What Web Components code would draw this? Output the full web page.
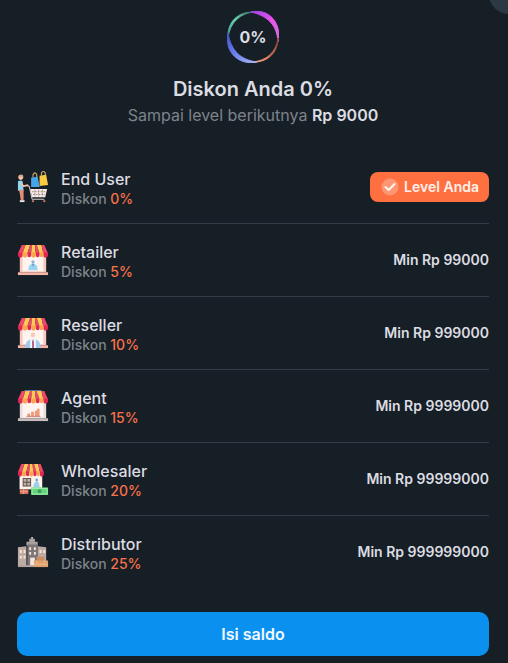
<!DOCTYPE html>
<html lang="id">
<head>
<meta charset="utf-8">
<meta name="viewport" content="width=device-width, initial-scale=1">
<title>Level Diskon</title>
<style>
body { margin: 0; background: #171f26; color: #dcdce3; font-family: Inter, "Liberation Sans", sans-serif; }
</style>
</head>
<body>
<discount-sheet>
  <discount-summary slot="summary" percent="0%" next="Rp 9000"></discount-summary>
  <level-row name="End User" discount="0%" icon="cart"><level-badge>Level Anda</level-badge></level-row>
  <level-row name="Retailer" discount="5%" icon="retail">Min Rp 99000</level-row>
  <level-row name="Reseller" discount="10%" icon="resell">Min Rp 999000</level-row>
  <level-row name="Agent" discount="15%" icon="agent">Min Rp 9999000</level-row>
  <level-row name="Wholesaler" discount="20%" icon="whole">Min Rp 99999000</level-row>
  <level-row name="Distributor" discount="25%" icon="building">Min Rp 999999000</level-row>
  <action-button slot="action">Isi saldo</action-button>
</discount-sheet>
<script>
const awning = `
  <path d="M4 0H8L5 9H0Z" fill="#f0486a"/><path d="M8 0H13L10 9H5Z" fill="#ffc955"/>
  <path d="M13 0H15L14 9H10Z" fill="#f0486a"/><path d="M15 0H18L19 9H14Z" fill="#ffc955"/>
  <path d="M18 0H20L23 9H19Z" fill="#f0486a"/><path d="M20 0H25L27 9H23Z" fill="#ffc955"/>
  <path d="M25 0H28L32 9H27Z" fill="#f0486a"/>
  <path d="M0 8H5V11A2.5 2.5 0 0 1 0 11ZM10 8H14V11A2 2 0 0 1 10 11ZM19 8H23V11A2 2 0 0 1 19 11ZM27 8H32V11A2.5 2.5 0 0 1 27 11Z" fill="#e02654"/>
  <path d="M5 8H10V11A2.5 2.5 0 0 1 5 11ZM14 8H19V11A2.5 2.5 0 0 1 14 11ZM23 8H27V11A2 2 0 0 1 23 11Z" fill="#fba64a"/>`;
const wall = (side, base) => `<path d="M2 8H30V29H2Z" fill="${side}"/><path d="M5 10H27V28H5Z" fill="#fff4f0"/><path d="M0 29H32V32H0Z" fill="${base}"/>`;
const icons = {
  cart: `
    <circle cx="3" cy="6" r="2.6" fill="#f7c4a5"/><path d="M0 5Q1 2 5 3L6 5H2Z" fill="#d8a58c"/>
    <path d="M0 10Q3 8 5 10L6 20H0Z" fill="#8ed5ef"/><path d="M3 12L6 15L11 14" stroke="#f7c4a5" stroke-width="1.8" fill="none"/>
    <path d="M0 19H6L6 30H3L2 23L1 19Z" fill="#e58d78"/><path d="M2 30H7V32H2Z" fill="#f0e4dd"/>
    <path d="M16 6V3Q18-1 20 3V6M25 4V1Q27-2 29 1V4" fill="none" stroke="#cfa56c" stroke-width="1.2"/>
    <path d="M14 6L21 5L23 16H14Z" fill="#45a4ea"/><path d="M23 4L30 3L32 14L23 15Z" fill="#fbca42"/>
    <path d="M13 18H31L29 27H15Z" fill="#f8ece6"/>
    <path d="M15 21H30M16 24H29M18 19V26M22 19V26M26 19V26" stroke="#a48c88" stroke-width="1" stroke-dasharray="2 1" fill="none"/>
    <path d="M10 15H12L15 29H28" stroke="#e6d9d6" stroke-width="1" fill="none"/>
    <circle cx="16" cy="31" r="1.3" fill="#c1706b"/><circle cx="28" cy="31" r="1.3" fill="#c1706b"/>`,
  retail: wall('#f8c9bd', '#f5b5a7') + awning + `
    <circle cx="16" cy="18" r="1.7" fill="#8bb3dc"/><path d="M11 27Q11 21 15 20H17Q21 21 21 27Z" fill="#9bd4ef"/><path d="M15 20H17L16 24Z" fill="#668dcc"/>`,
  resell: wall('#f8c9bd', '#f5b5a7') + awning + `
    <circle cx="16" cy="18" r="2.5" fill="#f6cbbd"/>
    <path d="M8 32Q8 24 13 23H19Q24 24 24 32Z" fill="#9fcbee"/><path d="M13 22L16 24L19 22V32H13Z" fill="#f6f8fc"/><path d="M15 24H17V32H15Z" fill="#b65a86"/>`,
  agent: `<path d="M7 -1H25V3H7Z" fill="#58789b"/>` + wall('#e9ddda', '#c7bcbb') + awning + `
    <path d="M10 24H13V27H10ZM14 22H17V27H14ZM18 21H21V27H18ZM20 19H23V27H20Z" fill="#ee9c7e"/><path d="M9 27H24" stroke="#c9786a"/>`,
  whole: `<g transform="scale(.86 1)"><path d="M2 8H30V27H2Z" fill="#fff1eb"/>${awning}</g>
    <path d="M5 15H14V24H5Z" fill="#694949"/><path d="M6 16H9V19H6ZM10 16H13V19H10ZM6 20H9V23H6ZM10 20H13V23H10Z" fill="#b3b6a5"/>
    <circle cx="20" cy="17" r="1.5" fill="#73aace"/><path d="M16 25Q17 19 20 18Q23 19 23 25Z" fill="#9ad2e9"/>
    <path d="M2 27H11V32H2Z" fill="#d9725f"/><path d="M2 29H11M6 27V32" stroke="#f0a48f"/>
    <path d="M14 25H32V33H14Z" fill="#66d47c"/><path d="M15 26H31V32H15Z" fill="none" stroke="#a2f0ab"/><circle cx="23" cy="29" r="2" fill="#3b9e60"/>`,
  building: `
    <path d="M14 0H16V3H14Z" fill="#c1b6b5"/><path d="M12 2H18V5H21V9H9V5H12Z" fill="#aaa09f"/><path d="M10 8H21V31H10Z" fill="#7e777a"/>
    <path d="M0 11L9 10V31H0ZM21 10L30 11V31H21Z" fill="#bdaaa5"/>
    <path d="M12 11H14V14H12ZM17 11H19V14H17ZM12 16H14V19H12ZM17 16H19V19H17ZM2 14H4V17H2ZM6 14H8V17H6ZM2 20H4V23H2ZM6 20H8V23H6ZM23 14H25V17H23ZM27 14H29V17H27Z" fill="#f7e7d4"/>
    <path d="M13 22H18V31H13Z" fill="#f4e6dc"/><path d="M0 30H30V32H0Z" fill="#b4a29c"/>
    <path d="M20 21H28V26H20Z" fill="#cf8d62"/><path d="M17 25H32V32H17Z" fill="#e0a170"/><path d="M20 25V28M28 25V28M17 29H32" stroke="#efc08c"/>`
};

class Base extends HTMLElement {
  constructor() { super(); this.attachShadow({ mode: 'open' }); }
  connectedCallback() { this.shadowRoot.innerHTML = this.view(); }
}

customElements.define('discount-sheet', class extends Base {
  view() { return `
<style>
:host { display: block; position: relative; overflow: hidden; padding: 11px 19px 7px 17px; }
.close { position: absolute; top: -26px; right: -21px; width: 40px; height: 40px; padding: 0; border: 0; border-radius: 50%; background: #2b3945; }
.levels { padding: 24px 0; }
</style>
<button class="close" type="button" aria-label="Tutup"></button>
<slot name="summary"></slot>
<div class="levels"><slot></slot></div>
<slot name="action"></slot>`; }
});

customElements.define('discount-summary', class extends Base {
  view() { const p = this.getAttribute('percent'); return `
<style>
:host { display: flex; flex-direction: column; align-items: center; text-align: center; }
.ring { display: grid; place-items: center; width: 52px; height: 52px; font-size: 16px; font-weight: 700; }
.ring > * { grid-area: 1 / 1; }
h1 { margin: 12px 0 0; font-size: 20px; line-height: 28px; font-weight: 600; }
p { margin: 0; font-size: 16px; line-height: 24px; color: #7d838b; }
b { font-weight: 600; color: #dcdce3; }
</style>
<div class="ring">
<svg width="52" height="52" viewBox="0 0 52 52" aria-hidden="true">
  <defs>
    <linearGradient id="g" x1="0" y1="1" x2="1" y2="0"><stop stop-color="#438fa0"/><stop offset=".5" stop-color="#69d5ad"/><stop offset="1" stop-color="#335d68"/></linearGradient>
    <linearGradient id="m" x1="0" y1="0" x2="1" y2="1"><stop stop-color="#9b43e8"/><stop offset=".5" stop-color="#e651ed"/><stop offset="1" stop-color="#d476d8"/></linearGradient>
    <linearGradient id="o" x1="1" y1="0" x2="0" y2="1"><stop stop-color="#843d32"/><stop offset=".6" stop-color="#e17e60"/><stop offset="1" stop-color="#f3ad91"/></linearGradient>
    <linearGradient id="b" x1="0" y1="0" x2="1" y2="1"><stop stop-color="#424fc8"/><stop offset=".5" stop-color="#6f83ef"/><stop offset="1" stop-color="#a9b9f5"/></linearGradient>
  </defs>
  <path d="M1 27C0 11 11 0 28 1C13 2 3 11 1 27Z" fill="url(#g)" stroke="url(#g)"/>
  <path d="M24 1C42-3 55 12 51 31C50 14 41 5 24 1Z" fill="url(#m)" stroke="url(#m)"/>
  <path d="M51 27C51 41 41 52 25 51C39 50 49 42 51 27Z" fill="url(#o)" stroke="url(#o)"/>
  <path d="M1 22C-3 41 12 55 30 51C14 49 4 40 1 22Z" fill="url(#b)" stroke="url(#b)"/>
</svg>
<span>${p}</span></div>
<h1>Diskon Anda ${p}</h1>
<p>Sampai level berikutnya <b>${this.getAttribute('next')}</b></p>`; }
});

customElements.define('level-row', class extends Base {
  view() { return `
<style>
:host { display: flex; align-items: center; gap: 12px; height: 72px; border-bottom: 1px solid #333c44; }
:host(:last-of-type) { border-bottom: 0; }
svg { flex: none; }
.text { flex: 1; min-width: 0; padding-top: 4px; line-height: 20px; }
.name { font-size: 16px; font-weight: 500; }
.sub { font-size: 14px; font-weight: 500; color: #7d838b; }
.sub span { color: #f8714a; }
.end { font-size: 14px; line-height: 20px; font-weight: 600; white-space: nowrap; }
</style>
<svg width="32" height="32" viewBox="-1 -1 34 34" aria-hidden="true">${icons[this.getAttribute('icon')]}</svg>
<div class="text"><div class="name">${this.getAttribute('name')}</div><div class="sub">Diskon <span>${this.getAttribute('discount')}</span></div></div>
<div class="end"><slot></slot></div>`; }
});

customElements.define('level-badge', class extends Base {
  view() { return `
<style>
:host { display: flex; align-items: center; gap: 4px; height: 30px; padding: 0 10px; border-radius: 8px; background: #ff7040; color: #fff0eb; }
</style>
<svg width="20" height="20" viewBox="0 0 20 20" aria-hidden="true"><circle cx="10" cy="10" r="8.5" fill="#ff9673"/><path d="M5.5 10L8.7 13L14.5 7" fill="none" stroke="#fff4ef" stroke-width="2" stroke-linecap="round" stroke-linejoin="round"/></svg>
<slot></slot>`; }
});

customElements.define('action-button', class extends Base {
  view() { return `
<style>
:host { display: block; }
button { display: block; width: 100%; height: 44px; padding: 0 16px; border: 0; border-radius: 10px; background: #0a91ef; color: #f1f8ff; font: 600 16px/20px Inter, "Liberation Sans", sans-serif; cursor: pointer; }
</style>
<button type="button"><slot></slot></button>`; }
});
</script>
</body>
</html>
